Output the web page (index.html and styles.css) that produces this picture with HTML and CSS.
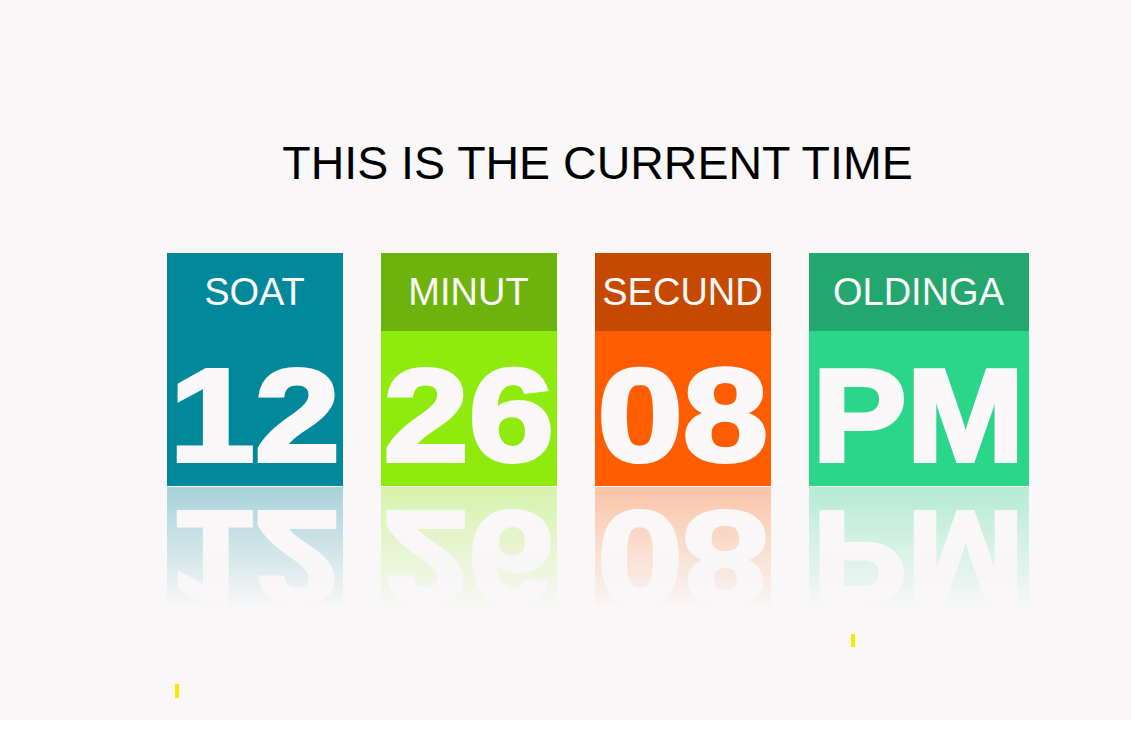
FILE: index.html
```html
<!DOCTYPE html>
<html lang="en">
<head>
<meta charset="utf-8">
<title>Current Time</title>
<link rel="stylesheet" href="styles.css">
</head>
<body>
<div class="page">
  <main class="clock">
    <h1 class="title">THIS IS THE CURRENT TIME</h1>
    <div class="cards">
      <div class="card card-hour">
        <div class="card-label">SOAT</div>
        <div class="card-value"><span class="num">12</span></div>
      </div>
      <div class="card card-min">
        <div class="card-label">MINUT</div>
        <div class="card-value"><span class="num">26</span></div>
      </div>
      <div class="card card-sec">
        <div class="card-label">SECUND</div>
        <div class="card-value"><span class="num">08</span></div>
      </div>
      <div class="card card-ampm">
        <div class="card-label">OLDINGA</div>
        <div class="card-value"><span class="num num-ampm">PM</span></div>
      </div>
    </div>
  </main>
  <span class="mark mark-a"></span>
  <span class="mark mark-b"></span>
</div>
</body>
</html>
```
FILE: styles.css
```css
html {
  background: #ffffff;
}
body {
  margin: 0;
  font-family: "Liberation Sans", Arial, sans-serif;
}
.page {
  position: relative;
  height: 720px;
  background: #f9f7f8;
  overflow: hidden;
}
.clock {
  margin-left: 64px;
  padding-top: 140px;
  display: flex;
  flex-direction: column;
  align-items: center;
}
.title {
  margin: 0;
  font-size: 46.5px;
  line-height: 46px;
  font-weight: normal;
  color: #000000;
}
.cards {
  margin-top: 67px;
  display: flex;
  gap: 38px;
}
.card {
  width: 176px;
  display: flex;
  flex-direction: column;
}
.card-ampm {
  width: 220px;
}
.card-label {
  height: 78px;
  line-height: 78px;
  text-align: center;
  font-size: 38px;
  color: #fbf9fa;
}
.card-value {
  height: 155px;
  box-sizing: border-box;
  padding-top: 19px;
  text-align: center;
  overflow: visible;
  -webkit-box-reflect: below 1px linear-gradient(to bottom, transparent 22%, rgba(0, 0, 0, 0.33));
}
.num {
  display: inline-block;
  font-size: 131px;
  line-height: 131px;
  font-weight: bold;
  color: #faf8f9;
  -webkit-text-stroke: 4px #faf8f9;
  white-space: nowrap;
  transform: scaleX(1.17);
  transform-origin: center;
}
.num-ampm {
  transform: scaleX(1.08);
}
.card-hour .card-label,
.card-hour .card-value { background: #01899b; }
.card-min .card-label { background: #6db30b; }
.card-min .card-value { background: #8fea0d; }
.card-sec .card-label { background: #c54a00; }
.card-sec .card-value { background: #ff5d00; }
.card-ampm .card-label { background: #23a76e; }
.card-ampm .card-value { background: #2bd58a; }
.mark {
  position: absolute;
  width: 4px;
  background: #fde600;
}
.mark-a {
  left: 851px;
  top: 634px;
  height: 13px;
}
.mark-b {
  left: 175px;
  top: 684px;
  height: 14px;
}
```
